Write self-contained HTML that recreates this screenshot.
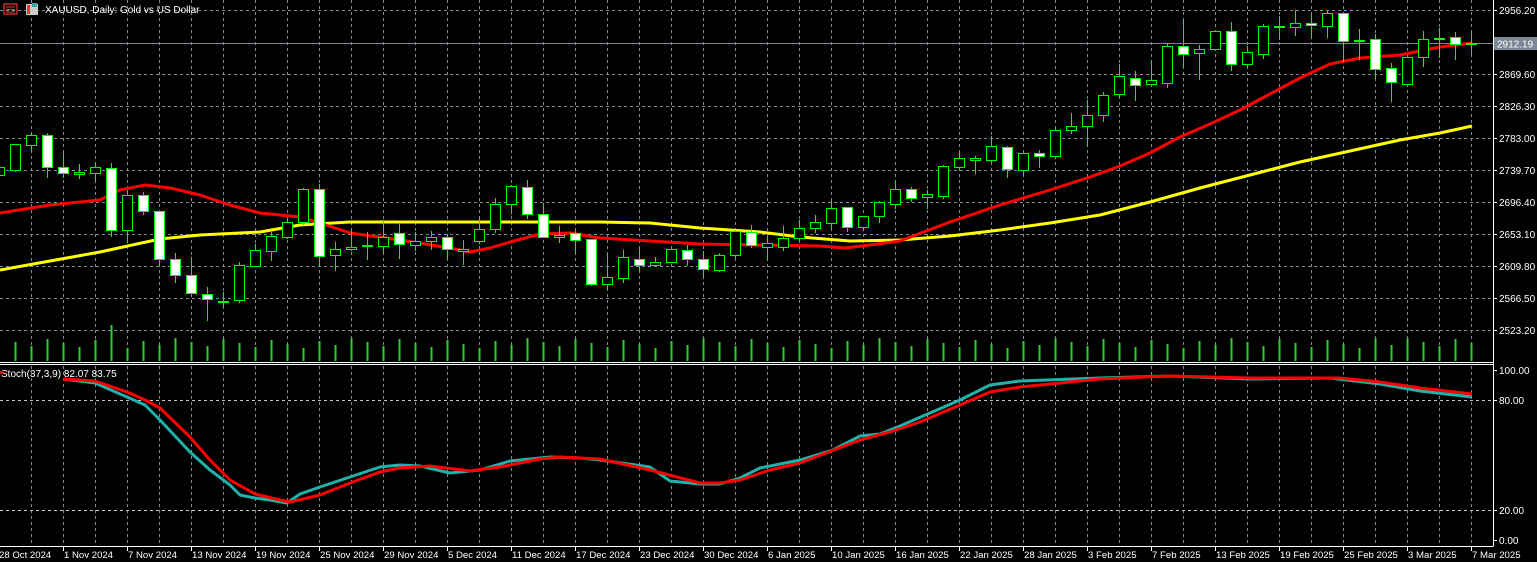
<!DOCTYPE html>
<html><head><meta charset="utf-8">
<style>
html,body{margin:0;padding:0;background:#000;width:1537px;height:562px;overflow:hidden}
svg{display:block}
text{font-family:"Liberation Sans","DejaVu Sans",sans-serif;font-size:10px;fill:#fff}
text.d{font-size:9.6px}
</style></head><body>
<svg id="c" width="1537" height="562" xmlns="http://www.w3.org/2000/svg">
<rect width="1537" height="562" fill="#000"/>
<g id="grid"></g>
<g id="vol"></g>
<g id="ma"></g>
<g id="candles"></g>
<g id="stoch"></g>
<g id="axes"></g>
<rect x="4" y="4" width="13" height="10" fill="none" stroke="#e33" stroke-width="1.2"/>
<line x1="6" y1="7" x2="15" y2="7" stroke="#e33"/><line x1="6" y1="9.5" x2="15" y2="9.5" stroke="#e33"/><line x1="6" y1="12" x2="15" y2="12" stroke="#e33"/>
<rect x="26" y="4" width="12" height="11" fill="#ccc"/><rect x="27" y="5" width="3" height="9" fill="#e33"/><rect x="32" y="3" width="5" height="4" fill="#3aa"/>
<text x="45" y="13">XAUUSD, Daily:  Gold vs US Dollar</text>
<text x="1" y="377">Stoch(37,3,9) 82.07 83.75</text>
<rect x="0" y="371" width="3" height="3" fill="#f00"/>
<rect x="1494" y="37" width="43" height="13" fill="#7d8896"/>
<text x="1497" y="47.5">2912.19</text>
</svg>
<script>
var NS="http://www.w3.org/2000/svg";
function el(p,t,a){var e=document.createElementNS(NS,t);for(var k in a)e.setAttribute(k,a[k]);document.getElementById(p).appendChild(e);return e;}
var gc="#7f8b99";
for(var x=31;x<1493;x+=32){
 el("grid","line",{x1:x+.5,y1:0,x2:x+.5,y2:361,stroke:gc,"stroke-dasharray":"3,3"});
 el("grid","line",{x1:x+.5,y1:366,x2:x+.5,y2:545,stroke:gc,"stroke-dasharray":"3,3"});
}
for(var y=10;y<=330;y+=32){ if(y==42)continue; el("grid","line",{x1:0,y1:y+.5,x2:1493,y2:y+.5,stroke:gc,"stroke-dasharray":"3,3"});}
el("grid","line",{x1:0,y1:43.5,x2:1493,y2:43.5,stroke:"#7d8896"});
el("grid","line",{x1:0,y1:400.5,x2:1493,y2:400.5,stroke:"#c8c8c8","stroke-dasharray":"3,3"});
el("grid","line",{x1:0,y1:510.5,x2:1493,y2:510.5,stroke:"#c8c8c8","stroke-dasharray":"3,3"});
var C=[[167,175,167,175,0],[144,170,144,171,0],[135,145,133,149,0],[135,167,133,177,1],[167,173,153,177,1],[172,174,164,178,0],[167,173,162,181,0],[168,230,163,236,1],[195,230,190,242,0],[195,211,192,214,1],[211,259,211,265,1],[259,275,253,282,1],[275,293,257,295,1],[294,299,287,320,1],[301,302,292,307,0],[265,300,262,302,0],
[250,266,244,266,0],[236,251,232,260,0],[222,237,219,238,0],[189,222,188,224,0],[189,256,184,265,1],[249,255,242,270,0],[247,249,230,250,0],[245,246,232,259,0],[237,246,220,252,0],[233,244,223,258,1],[241,245,232,250,0],[237,241,231,249,0],[237,249,235,258,1],[249,251,240,264,0],[229,241,216,243,0],[204,229,198,232,0],
[186,204,185,213,0],[187,214,180,218,1],[214,237,203,237,1],[235,237,226,242,0],[233,240,231,252,1],[239,284,239,285,1],[277,284,254,289,0],[257,278,250,282,0],[259,265,249,270,1],[262,265,257,265,0],[249,262,249,262,0],[250,259,245,265,1],[259,269,251,277,1],[255,270,253,271,0],[231,255,230,257,0],[232,245,225,247,1],
[243,247,237,260,0],[238,247,226,250,0],[228,238,220,240,0],[222,228,215,232,0],[208,223,201,228,0],[207,227,207,231,1],[216,227,216,230,0],[202,216,201,222,0],[189,204,180,208,0],[189,198,187,201,1],[194,197,190,208,0],[166,196,165,198,0],[158,167,153,168,0],[158,160,156,173,0],[146,160,136,162,0],
[147,169,146,177,1],[153,170,153,175,0],[153,156,150,167,1],[130,156,128,158,0],[126,130,113,133,0],[115,126,100,146,0],[95,115,92,121,0],[76,94,64,97,0],[78,85,71,100,1],[80,84,60,85,0],[46,83,44,87,0],[46,54,20,67,1],[49,53,45,79,0],[31,49,31,49,0],[31,64,22,70,1],[52,64,46,67,0],
[26,54,24,58,0],[26,27,16,39,0],[23,27,10,35,0],[23,25,15,38,1],[13,26,10,37,0],[13,41,13,61,1],[40,41,29,59,0],[39,69,34,78,1],[68,82,63,101,1],[57,84,57,85,0],[39,57,31,66,0],[38,39,28,57,0],[37,44,32,59,1],[43,44,32,55,0]];
var G="#00ff00";
for(var i=0;i<C.length;i++){
 var cx=Math.round(15.3+16*(i-1))+.5, c=C[i];
 el("candles","line",{x1:cx,y1:c[2],x2:cx,y2:c[3]+1,stroke:G});
 var h=c[1]-c[0]; if(h<1)h=1;
 el("candles","rect",{x:cx-5,y:c[0]+.5,width:10,height:h,fill:c[4]?"#fff":"#000",stroke:G});
 var vt=343+((i*37)%11)-5; if(i==7)vt=325; if(i==86)vt=338;
 if(cx>0) el("vol","line",{x1:cx,y1:vt,x2:cx,y2:361,stroke:"#32cd32","stroke-width":2});
}
function pl(g,pts,col,w){var d="";for(var i=0;i<pts.length;i+=2)d+=(i?"L":"M")+pts[i]+" "+pts[i+1];el(g,"path",{d:d,fill:"none",stroke:col,"stroke-width":w,"stroke-linejoin":"round"});}
pl("ma",[0,270,50,261,100,252,160,239,200,235,260,232,300,225,350,222,400,222,450,222,500,222,600,222,650,223,700,228,760,232,800,237,850,241,900,240,950,236,1000,230,1050,223,1100,215,1150,202,1200,188,1250,175,1300,162,1350,151,1400,140,1440,133,1472,126],"#ffff00",3);
pl("ma",[0,213,50,205,100,200,120,190,145,185,170,188,200,195,230,205,260,213,300,217,320,223,350,233,400,240,450,248,470,252,490,248,510,242,540,234,570,233,600,238,650,241,700,244,760,245,820,246,845,248,870,245,900,241,950,222,1000,205,1050,190,1090,177,1120,166,1150,153,1180,137,1210,124,1240,110,1270,94,1300,78,1330,64,1360,58,1400,55,1440,47,1472,43],"#ff0000",3);
pl("stoch",[63,379,95,383,127,397,145,405,160,420,190,452,210,470,230,485,240,495,255,498,270,500,287,503,300,494,320,487,350,477,380,467,400,465,420,466,450,473,480,470,510,461,550,457,580,458,600,460,650,467,670,481,700,484,720,484,740,478,760,468,800,460,833,450,860,436,880,434,900,426,930,413,960,400,990,385,1020,381,1100,378,1170,376,1250,379,1330,378,1380,384,1420,391,1472,397],"#20b2aa",3);
pl("stoch",[63,379,95,381,127,392,145,400,160,408,190,437,210,460,230,480,255,494,280,500,290,502,320,495,350,483,380,472,400,468,430,466,470,471,500,467,540,459,560,457,600,459,650,470,700,483,720,483,740,480,770,470,800,463,860,440,890,432,920,422,960,405,990,392,1020,387,1060,383,1100,379,1170,376,1250,378,1340,378,1380,382,1420,388,1472,394],"#ff0000",3);
el("axes","line",{x1:0,y1:362.5,x2:1493,y2:362.5,stroke:"#fff"});
el("axes","line",{x1:0,y1:364.5,x2:1493,y2:364.5,stroke:"#fff"});
el("axes","line",{x1:1493.5,y1:0,x2:1493.5,y2:546,stroke:"#fff"});
el("axes","line",{x1:0,y1:546.5,x2:1493.5,y2:546.5,stroke:"#fff"});
var P=["2956.20","2912.19","2869.60","2826.30","2783.00","2739.70","2696.40","2653.10","2609.80","2566.50","2523.20"];
for(var k=0;k<11;k++){var y=10+32*k; if(k==1)continue; el("axes","line",{x1:1493,y1:y+.5,x2:1497,y2:y+.5,stroke:"#fff"}); var t=el("axes","text",{x:1499,y:y+4});t.textContent=P[k];}
var S=[[370,"100.00"],[400,"80.00"],[510,"20.00"],[540,"0.00"]];
S.forEach(function(s){el("axes","line",{x1:1493,y1:s[0]+.5,x2:1497,y2:s[0]+.5,stroke:"#fff"});var t=el("axes","text",{x:1499,y:s[0]+4});t.textContent=s[1];});
var D=["28 Oct 2024","1 Nov 2024","7 Nov 2024","13 Nov 2024","19 Nov 2024","25 Nov 2024","29 Nov 2024","5 Dec 2024","11 Dec 2024","17 Dec 2024","23 Dec 2024","30 Dec 2024","6 Jan 2025","10 Jan 2025","16 Jan 2025","22 Jan 2025","28 Jan 2025","3 Feb 2025","7 Feb 2025","13 Feb 2025","19 Feb 2025","25 Feb 2025","3 Mar 2025","7 Mar 2025"];
for(var j=0;j<D.length;j++){var x=j==0?-1:63+64*(j-1); if(j>0)el("axes","line",{x1:x+.5,y1:546,x2:x+.5,y2:551,stroke:"#fff"}); var t=el("axes","text",{x:x+(j?1:0),y:558,"class":"d"});t.textContent=D[j];}
</script>
</body></html>
